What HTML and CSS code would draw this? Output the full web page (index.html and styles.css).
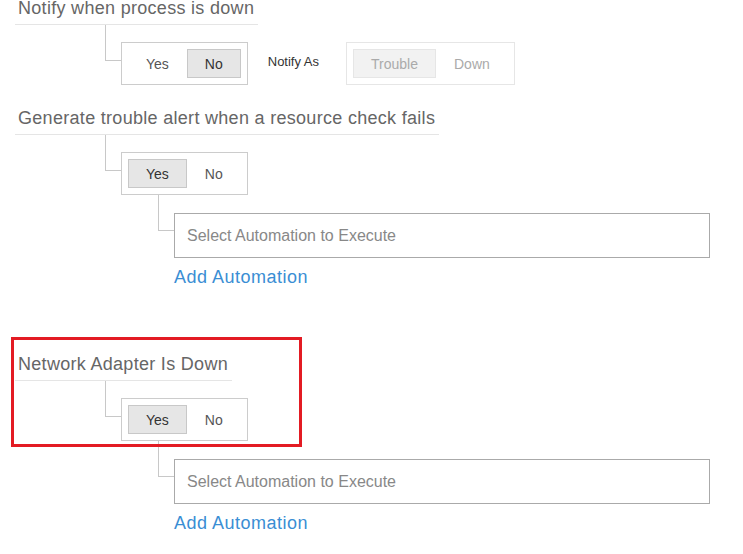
FILE: index.html
```html
<!DOCTYPE html>
<html>
<head>
    <title>Process Monitor Alerts</title>
    <link rel="stylesheet" href="styles.css">
</head>
<body>
    <div class="rule rule-first">
        <div class="rule-title">Notify when process is down</div>
        <div class="branch">
            <span class="elbow"></span>
            <div class="toggle">
                <button class="toggle-btn">Yes</button>
                <button class="toggle-btn active">No</button>
            </div>
            <span class="notify-label">Notify As</span>
            <div class="toggle toggle-disabled">
                <button class="toggle-btn active" disabled>Trouble</button>
                <button class="toggle-btn" disabled>Down</button>
            </div>
        </div>
    </div>

    <div class="rule rule-resource">
        <div class="rule-title">Generate trouble alert when a resource check fails</div>
        <div class="branch">
            <span class="elbow"></span>
            <div class="toggle">
                <button class="toggle-btn active">Yes</button>
                <button class="toggle-btn">No</button>
            </div>
        </div>
        <div class="sub-branch">
            <span class="elbow"></span>
            <input class="automation-input" type="text" placeholder="Select Automation to Execute">
        </div>
        <a class="add-link" href="#">Add Automation</a>
    </div>

    <div class="rule rule-adapter">
        <div class="highlight"></div>
        <div class="rule-title">Network Adapter Is Down</div>
        <div class="branch">
            <span class="elbow"></span>
            <div class="toggle">
                <button class="toggle-btn active">Yes</button>
                <button class="toggle-btn">No</button>
            </div>
        </div>
        <div class="sub-branch">
            <span class="elbow"></span>
            <input class="automation-input" type="text" placeholder="Select Automation to Execute">
        </div>
        <a class="add-link" href="#">Add Automation</a>
    </div>
</body>
</html>
```

FILE: styles.css
```css
body {
    margin: 0;
    font-family: "Liberation Sans", Arial, sans-serif;
    background-color: #fff;
}

.rule {
    position: relative;
    padding-left: 15px;
}

.rule-first {
    margin-top: -3px;
}

.rule-resource {
    margin-top: 22px;
}

.rule-adapter {
    margin-top: 65px;
}

.rule-title {
    width: fit-content;
    font-size: 18px;
    line-height: 22px;
    letter-spacing: 0.3px;
    color: #666;
    padding: 0 4px 5px 3px;
    border-bottom: 1px solid #e5e5e5;
}

.branch {
    display: flex;
    align-items: flex-start;
    padding-left: 90px;
}

.sub-branch {
    display: flex;
    align-items: flex-start;
    padding-left: 143px;
}

.elbow {
    flex-shrink: 0;
    width: 15px;
    height: 35px;
    border-left: 1px solid #c8c8c8;
    border-bottom: 1px solid #c8c8c8;
}

.toggle {
    display: flex;
    margin-top: 17px;
    padding: 6px;
    border: 1px solid #ccc;
}

.toggle-btn {
    height: 29px;
    padding: 0 17px;
    font-family: inherit;
    font-size: 14px;
    color: #555;
    background: none;
    border: 1px solid transparent;
}

.toggle-btn.active {
    color: #333;
    background-color: #e6e6e6;
    border-color: #c8c8c8;
}

.toggle-disabled {
    border-color: #e6e6e6;
}

.toggle-disabled .toggle-btn {
    color: #aaa;
}

.toggle-disabled .toggle-btn.active {
    color: #aaa;
    background-color: #f2f2f2;
    border-color: #e6e6e6;
}

.notify-label {
    margin: 15px 27px 0 20px;
    line-height: 43px;
    font-size: 13px;
    color: #333;
}

.automation-input {
    box-sizing: border-box;
    width: 536px;
    height: 45px;
    margin: 18px 0 0;
    padding: 0 12px;
    font-family: inherit;
    font-size: 16px;
    color: #333;
    border: 1px solid #aaa;
    border-radius: 0;
    outline: none;
}

.automation-input::placeholder {
    color: #888;
}

.add-link {
    display: block;
    width: fit-content;
    margin: 8px 0 0 159px;
    font-size: 18px;
    line-height: 22px;
    letter-spacing: 0.5px;
    color: #3a8ed4;
    text-decoration: none;
}

.highlight {
    position: absolute;
    left: 11px;
    top: -16px;
    width: 291px;
    height: 110px;
    box-sizing: border-box;
    border: 3px solid #e31b23;
}
```
